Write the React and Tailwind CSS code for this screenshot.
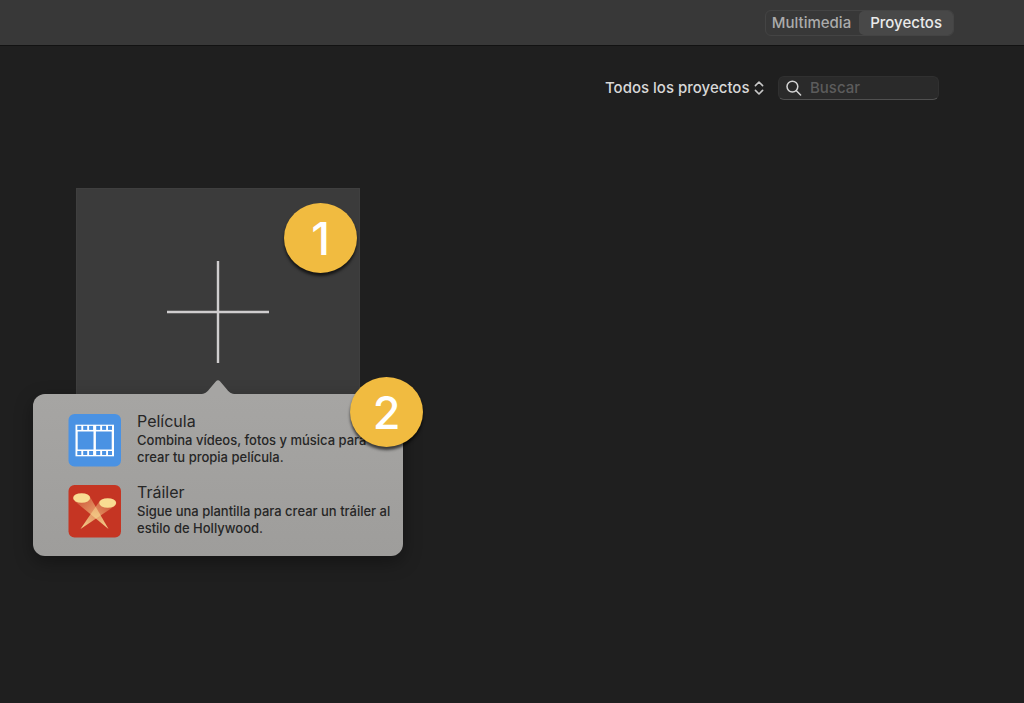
import React, { useState } from 'react';

const MovieIcon = () => (
  <svg viewBox="0 0 53 53" className="w-[53px] h-[53px] shrink-0" aria-hidden="true">
    <rect x="0.5" y="0" width="52.5" height="52.5" rx="6" fill="#4a92e3" />
    <rect x="7.5" y="10.7" width="38.5" height="31.6" fill="#fff" />
    {[9.3, 15.2, 21.1, 28.2, 34.1, 40].map((x) => (
      <g key={x} fill="#4a92e3">
        <rect x={x} y="11.9" width="4" height="4" />
        <rect x={x} y="37" width="4" height="4" />
      </g>
    ))}
    <rect x="9.7" y="17.5" width="15.8" height="18" fill="#4a92e3" />
    <rect x="27.9" y="17.5" width="15.8" height="18" fill="#4a92e3" />
  </svg>
);

const TrailerIcon = () => (
  <svg viewBox="0 0 53 53" className="w-[53px] h-[53px] shrink-0" aria-hidden="true">
    <defs>
      <linearGradient id="beamLeft" x1="13" y1="14" x2="40" y2="44" gradientUnits="userSpaceOnUse">
        <stop offset="0" stopColor="#f9dc92" stopOpacity="0.25" />
        <stop offset="1" stopColor="#f9dc92" stopOpacity="0.95" />
      </linearGradient>
      <linearGradient id="beamRight" x1="39" y1="18" x2="12" y2="44" gradientUnits="userSpaceOnUse">
        <stop offset="0" stopColor="#f9dc92" stopOpacity="0.25" />
        <stop offset="1" stopColor="#f9dc92" stopOpacity="0.95" />
      </linearGradient>
    </defs>
    <rect x="0.5" y="0" width="52.5" height="52.5" rx="6" fill="#c53523" />
    <path d="M6.5 16 L21.5 11 L40.5 44 Z" fill="url(#beamLeft)" />
    <path d="M32 15.5 L47.5 20.5 L12.5 44 Z" fill="url(#beamRight)" />
    <ellipse cx="13.6" cy="13" rx="8.5" ry="4.8" fill="#f9dc92" />
    <ellipse cx="39.7" cy="18" rx="8.5" ry="4.8" fill="#f9dc92" />
  </svg>
);

const Badge = ({ children, className }) => (
  <span
    className={`absolute flex w-[73px] h-[70px] items-center justify-center rounded-[50%] bg-[#f1bb40] text-[45px] font-medium leading-none text-white shadow-[0_3px_3px_rgba(0,0,0,0.65)] ${className}`}
  >
    {children}
  </span>
);

const OPTIONS = [
  {
    title: 'Película',
    text: 'Combina vídeos, fotos y música para crear tu propia película.',
    Icon: MovieIcon,
  },
  {
    title: 'Tráiler',
    text: 'Sigue una plantilla para crear un tráiler al estilo de Hollywood.',
    Icon: TrailerIcon,
  },
];

const Popover = () => (
  <div className="absolute -left-[43px] top-[206px] w-[370px] rounded-xl bg-linear-to-b from-[#a6a5a3] to-[#9e9d9b] pl-[35px] pr-2 pt-5 pb-[18px] shadow-[0_6px_18px_rgba(0,0,0,0.35)]">
    <svg
      viewBox="0 0 36 15"
      className="absolute left-[167px] -top-[14px] w-9 h-[15px]"
      aria-hidden="true"
    >
      <path
        d="M0 15 V14 C5 14 7 12 9 9.5 L15.8 1.4 Q18 -1 20.2 1.4 L27 9.5 C29 12 31 14 36 14 V15 Z"
        fill="#a6a5a3"
      />
    </svg>
    <div className="flex flex-col gap-[18px]">
      {OPTIONS.map(({ title, text, Icon }) => (
        <button key={title} className="flex h-[53px] items-start gap-4 text-left text-[#262626]">
          <Icon />
          <span className="block -mt-1">
            <span className="block text-base leading-[22px]">{title}</span>
            <span className="block text-[13px] font-medium leading-[17px]">{text}</span>
          </span>
        </button>
      ))}
    </div>
    <Badge className="-right-5 -top-[17px]">2</Badge>
  </div>
);

export default function App() {
  const [tab, setTab] = useState('Proyectos');
  const [query, setQuery] = useState('');

  return (
    <div className="min-h-screen bg-[#1f1f1f] font-[Inter,sans-serif]">
      <header className="flex h-[46px] items-center justify-end border-b border-[#121212] bg-[#383838] pr-[70px]">
        <nav className="flex h-[26px] rounded-md border border-[#444444]">
          {['Multimedia', 'Proyectos'].map((name) => (
            <button
              key={name}
              onClick={() => setTab(name)}
              aria-pressed={tab === name}
              className={
                tab === name
                  ? 'rounded-[5px] bg-[#484848] px-[11px] text-[15px] font-medium leading-6 text-[#eaeaea]'
                  : 'pl-1.5 pr-2 text-[15px] font-medium leading-6 text-[#ababab]'
              }
            >
              {name}
            </button>
          ))}
        </nav>
      </header>

      <main>
        <div className="flex items-center justify-end gap-3.5 pt-[30px] pr-[85px]">
          <div className="relative flex items-center">
            <select
              aria-label="Filtrar proyectos"
              className="appearance-none bg-transparent pr-3.5 text-[15px] font-medium leading-6 text-[#d8d8d8]"
            >
              <option>Todos los proyectos</option>
            </select>
            <svg
              viewBox="0 0 10 16"
              className="pointer-events-none absolute right-0 w-2.5 h-4"
              fill="none"
              stroke="#c8c8c8"
              strokeWidth="1.6"
              strokeLinecap="round"
              strokeLinejoin="round"
              aria-hidden="true"
            >
              <path d="M1.4 5.6 L5 2 L8.6 5.6 M1.4 10.4 L5 14 L8.6 10.4" />
            </svg>
          </div>
          <label className="flex h-6 w-[161px] items-center gap-2 rounded-md border border-[#303030] border-b-[#505050] bg-[#2a2a2a] px-[7px]">
            <svg
              viewBox="0 0 16 16"
              className="w-4 h-4 shrink-0"
              fill="none"
              stroke="#d4d4d4"
              strokeWidth="1.5"
              strokeLinecap="round"
              aria-hidden="true"
            >
              <circle cx="6.4" cy="6.6" r="5.4" />
              <path d="M10.4 10.8 L14.6 15" />
            </svg>
            <input
              type="search"
              aria-label="Buscar"
              placeholder="Buscar"
              value={query}
              onChange={(e) => setQuery(e.target.value)}
              className="min-w-0 flex-1 bg-transparent text-[15px] font-medium leading-5 text-[#d8d8d8] outline-none placeholder:text-[#5c5c5c]"
            />
          </label>
        </div>

        <section className="mt-[88px] ml-[76px] relative w-[284px]">
          <button
            aria-label="Crear nuevo"
            className="flex h-[248px] w-full items-center justify-center border border-[#3f3f3f] bg-[#3b3b3b]"
          >
            <svg viewBox="0 0 102 102" className="w-[102px] h-[102px]" aria-hidden="true">
              <path d="M51 0 V102 M0 51 H102" stroke="#cfcdce" strokeWidth="2.4" />
            </svg>
          </button>
          <Badge className="right-[3px] top-[15px]">1</Badge>
          <Popover />
        </section>
      </main>
    </div>
  );
}
